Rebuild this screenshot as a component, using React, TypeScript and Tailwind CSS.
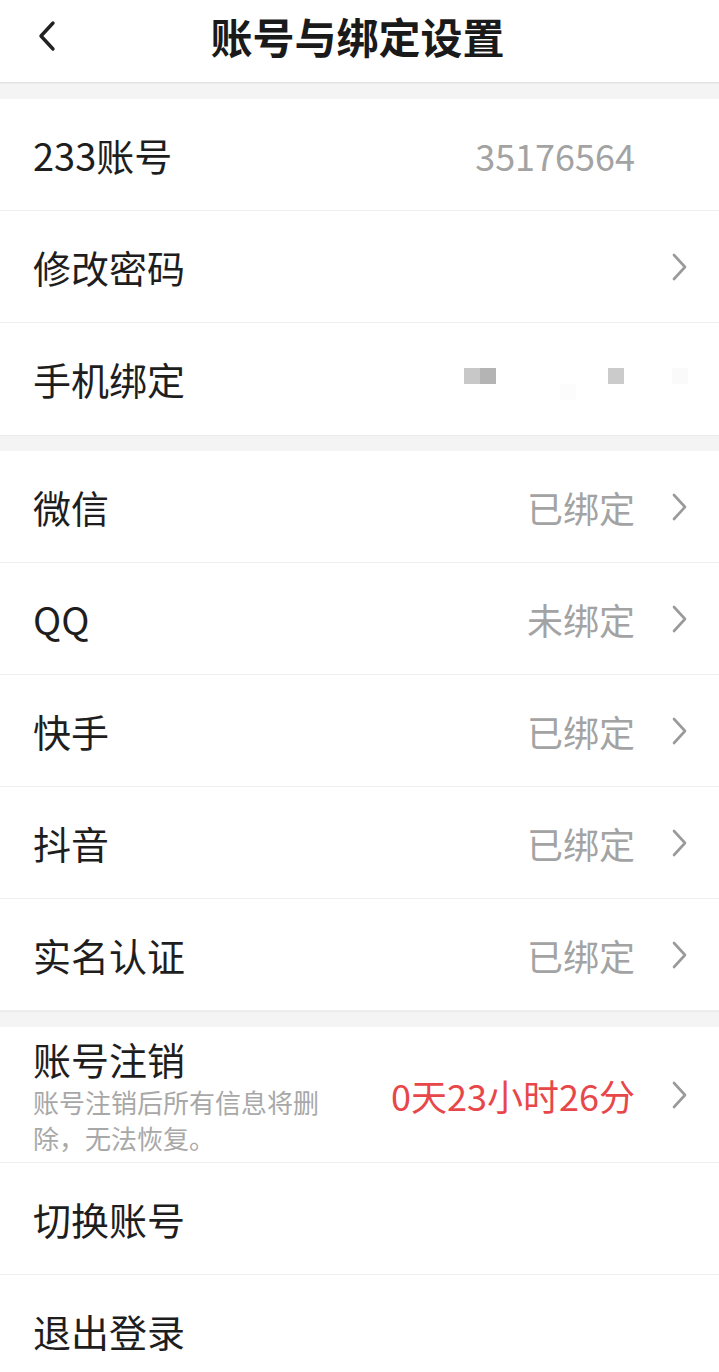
import React from "react";

type Row = {
  label: string;
  value?: string;
  arrow?: boolean;
};

const font = { fontFamily: '"Noto Sans CJK SC", "Noto Sans", sans-serif' };

function Chevron({ hidden }: { hidden?: boolean }) {
  return (
    <svg
      width="16"
      height="28"
      viewBox="0 0 16 28"
      className={hidden ? "invisible" : ""}
      fill="none"
    >
      <path d="M2 2 L13 14 L2 26" stroke="#9a9a9a" strokeWidth="2.6" strokeLinecap="round" strokeLinejoin="round" />
    </svg>
  );
}

function ListRow({ label, value, arrow }: Row) {
  return (
    <div className="flex items-center h-[112px] pl-[33px] pr-[31px] bg-white border-b border-[#f0f0f0]">
      <span className="text-[38px] text-[#1e1e1e] leading-none">{label}</span>
      <span className="ml-auto text-[36px] text-[#a3a3a3] leading-none">{value}</span>
      <div className="ml-[37px]">
        <Chevron hidden={!arrow} />
      </div>
    </div>
  );
}

function Band() {
  return <div className="h-[16px] bg-[#f4f4f4] border-t border-[#ebebeb]" />;
}

// blurred mosaic standing in for the masked phone number
const mosaic: Record<string, string> = {
  "0-0": "bg-[#c8c8c8]",
  "0-1": "bg-[#b4b4b4]",
  "0-9": "bg-[#cbcbcb]",
  "0-13": "bg-[#fafafa]",
  "1-6": "bg-[#fcfcfc]",
};

function PhoneRow() {
  const cells = [];
  for (let r = 0; r < 2; r++) {
    for (let c = 0; c < 14; c++) {
      cells.push(<div key={`${r}-${c}`} className={`w-[16px] h-[16px] ${mosaic[`${r}-${c}`] ?? ""}`} />);
    }
  }
  return (
    <div className="flex items-center h-[112px] pl-[33px] pr-[31px] bg-white">
      <span className="text-[38px] text-[#1e1e1e] leading-none">手机绑定</span>
      <div className="ml-auto mt-[9px] grid grid-cols-[repeat(14,16px)] grid-rows-[16px_16px]">
        {cells}
      </div>
    </div>
  );
}

export default function App() {
  const group2: Row[] = [
    { label: "微信", value: "已绑定", arrow: true },
    { label: "QQ", value: "未绑定", arrow: true },
    { label: "快手", value: "已绑定", arrow: true },
    { label: "抖音", value: "已绑定", arrow: true },
    { label: "实名认证", value: "已绑定", arrow: true },
  ];

  return (
    <div className="w-[719px] h-[1372px] overflow-hidden bg-white" style={font}>
      {/* Header */}
      <div className="relative flex items-center justify-center h-[83px] border-b border-[#e3e3e3] bg-white">
        <svg className="absolute left-[36px] top-[20px]" width="22" height="32" viewBox="0 0 22 32" fill="none">
          <path d="M17 3 L5 16 L17 29" stroke="#222" strokeWidth="3.4" strokeLinecap="round" strokeLinejoin="round" />
        </svg>
        <h1 className="text-[42px] font-bold text-[#1a1a1a] leading-none -mt-[10px] ml-[-4px]">账号与绑定设置</h1>
      </div>

      <Band />
      <ListRow label="233账号" value="35176564" />
      <ListRow label="修改密码" arrow />
      <PhoneRow />

      <Band />
      {group2.map((r) => (
        <ListRow key={r.label} {...r} />
      ))}

      <Band />
      {/* Account cancellation */}
      <div className="flex items-center h-[136px] pl-[33px] pr-[31px] bg-white border-b border-[#f0f0f0]">
        <div className="flex flex-col">
          <span className="text-[38px] leading-[50px] text-[#1e1e1e]">账号注销</span>
          <p className="w-[292px] text-[26px] leading-[36px] text-[#a8a8a8]">账号注销后所有信息将删除，无法恢复。</p>
        </div>
        <span className="ml-auto text-[36px] text-[#e8474a] leading-none">0天23小时26分</span>
        <div className="ml-[37px]">
          <Chevron />
        </div>
      </div>
      <ListRow label="切换账号" />
      <ListRow label="退出登录" />
    </div>
  );
}
